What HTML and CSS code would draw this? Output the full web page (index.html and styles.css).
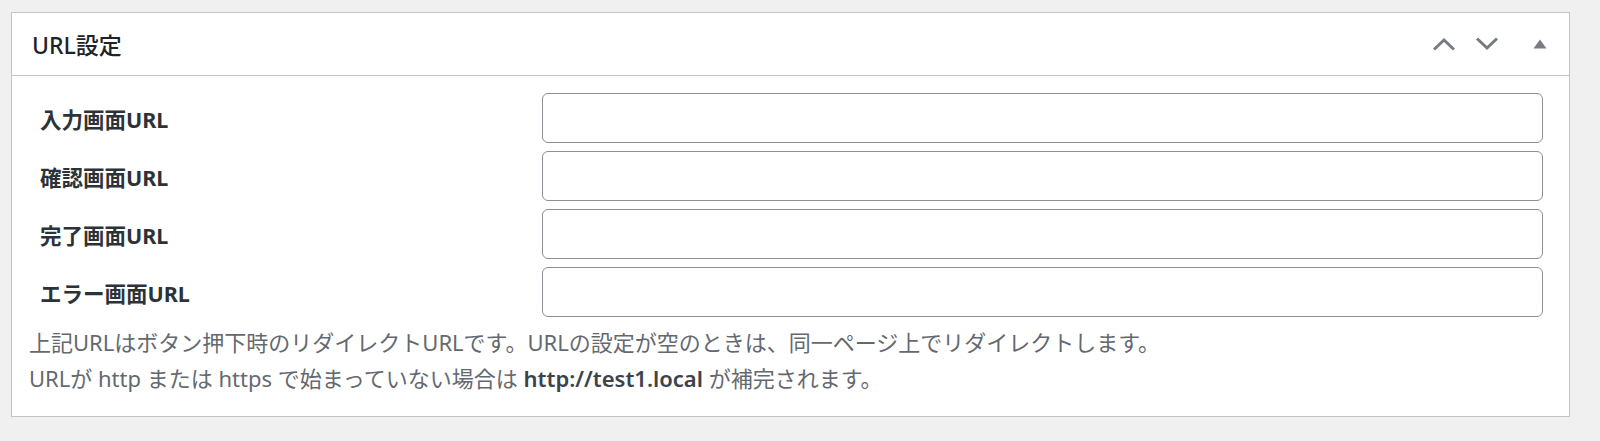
FILE: index.html
```html
<!DOCTYPE html>
<html lang="ja">
<head>
    <meta charset="UTF-8">
    <title>URL設定</title>
    <link rel="stylesheet" href="styles.css">
</head>
<body>
    <div class="postbox">
        <div class="postbox-header">
            <h2 class="hndle">URL設定</h2>
            <div class="handle-actions">
                <button type="button" class="handle-btn" aria-label="上へ移動">
                    <svg width="24" height="14" viewBox="0 0 24 14"><polyline points="2,12.5 12,3 22,12.5" fill="none" stroke="#787c82" stroke-width="3"/></svg>
                </button>
                <button type="button" class="handle-btn" aria-label="下へ移動">
                    <svg width="24" height="14" viewBox="0 0 24 14"><polyline points="2,1.5 12,11 22,1.5" fill="none" stroke="#787c82" stroke-width="3"/></svg>
                </button>
                <button type="button" class="handle-btn toggle" aria-label="パネルを切り替え">
                    <svg width="14" height="10" viewBox="0 0 14 10"><polygon points="7,0.5 13.5,9.5 0.5,9.5" fill="#787c82"/></svg>
                </button>
            </div>
        </div>
        <div class="inside">
            <div class="form-table">
                <label class="field-label" for="url_input">入力画面URL</label>
                <input type="text" id="url_input" class="regular-text">
                <label class="field-label" for="url_confirm">確認画面URL</label>
                <input type="text" id="url_confirm" class="regular-text">
                <label class="field-label" for="url_complete">完了画面URL</label>
                <input type="text" id="url_complete" class="regular-text">
                <label class="field-label" for="url_error">エラー画面URL</label>
                <input type="text" id="url_error" class="regular-text">
            </div>
            <p class="description">
                上記URLはボタン押下時のリダイレクトURLです。URLの設定が空のときは、同一ページ上でリダイレクトします。<br>
                URLが http または https で始まっていない場合は <strong>http://test1.local</strong> が補完されます。
            </p>
        </div>
    </div>
</body>
</html>
```

FILE: styles.css
```css
body { margin: 0; padding: 12px 30px 25px 11px; background: #f0f0f1; font-family: "Noto Sans", "Noto Sans CJK JP", sans-serif; color: #3c434a; }
.postbox { background: #fff; border: 1px solid #c3c4c7; }
.postbox-header { display: flex; align-items: center; justify-content: space-between; height: 62px; border-bottom: 1px solid #c3c4c7; padding: 0 2px 0 20px; }
.hndle { margin: 0; font-size: 23px; font-weight: 500; color: #1d2327; }
.handle-actions { display: flex; align-items: center; }
.handle-btn { width: 43px; height: 50px; padding: 0; border: 0; background: none; display: flex; align-items: center; justify-content: center; cursor: pointer; }
.handle-btn.toggle { width: 54px; margin-left: 5px; }
.inside { padding: 17px 26px 20px 17px; }
.form-table { display: grid; grid-template-columns: 513px 1fr; row-gap: 8px; align-items: center; }
.field-label { padding-left: 11px; font-size: 21.5px; font-weight: 700; color: #2c3338; }
.regular-text { height: 50px; box-sizing: border-box; border: 1px solid #8c8f94; border-radius: 6px; padding: 0 12px; font: inherit; }
.description { margin: 7px 0 0; font-size: 22px; line-height: 36px; color: #646970; }
.description strong { color: #3c434a; font-weight: 600; }
```
